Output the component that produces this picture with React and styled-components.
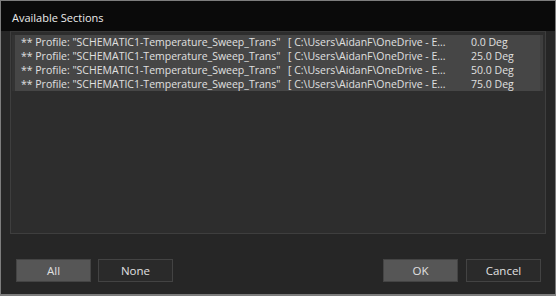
import React from "react";
import styled, { createGlobalStyle } from "styled-components";

const Global = createGlobalStyle`
  html, body { margin: 0; padding: 0; background: #262626; }
  body { font-family: "Open Sans", "Liberation Sans", sans-serif; }
  * { box-sizing: border-box; }
`;

const Window = styled.div`
  width: 556px;
  height: 296px;
  border: 1px solid #7d7d7d;
  border-bottom-width: 2px;
  background: #262626;
  display: flex;
  flex-direction: column;
  color: #e0e0e0;
  font-size: 10.5px;
`;

const TitleBar = styled.div`
  height: 30px;
  background: #0a0a0a;
  display: flex;
  align-items: center;
  padding: 3px 0 0 11px;
  color: #ececec;
  font-size: 11px;
`;

const ListBox = styled.div`
  margin: 0 9px;
  height: 203px;
  background: #2d2d2d;
  border: 1px solid #3e3e3e;
  border-top-color: #383838;
  padding: 3px 1px 0 1px;
`;

const Rows = styled.div`
  display: flex;
  flex-direction: column;
  border-left: 3px solid #333333;
  border-right: 3px solid #3f3f3f;
  margin-right: 1px;
`;

const Row = styled.div`
  display: grid;
  grid-template-columns: 267px 183px auto;
  height: 14px;
  align-items: center;
  padding-left: 6px;
  background: ${(p) => (p.$selected ? "#464646" : "transparent")};
  white-space: nowrap;
  line-height: 14px;
`;

const Cell = styled.span`
  overflow: visible;
`;

const Footer = styled.div`
  display: flex;
  align-items: flex-start;
  padding: 25px 14px 0 15px;
`;

const Group = styled.div`
  display: flex;
  gap: ${(p) => p.$gap}px;
  margin-left: ${(p) => (p.$push ? "auto" : "0")};
`;

const Button = styled.button`
  width: 75px;
  height: 23px;
  font-family: inherit;
  font-size: 11.5px;
  color: #e0e0e0;
  background: ${(p) => (p.$primary ? "#565656" : "#2a2a2a")};
  border: 1px solid ${(p) => (p.$primary ? "#444444" : "#434343")};
  padding: 0;
  display: flex;
  align-items: center;
  justify-content: center;
`;

const rows = ["0.0", "25.0", "50.0", "75.0"];

export default function App() {
  return (
    <>
      <Global />
      <Window>
        <TitleBar>Available Sections</TitleBar>
        <ListBox>
          <Rows>
            {rows.map((d) => (
              <Row key={d} $selected>
                <Cell>** Profile: "SCHEMATIC1-Temperature_Sweep_Trans"</Cell>
                <Cell>[ C:\Users\AidanF\OneDrive - E...</Cell>
                <Cell>{d} Deg</Cell>
              </Row>
            ))}
          </Rows>
        </ListBox>
        <Footer>
          <Group $gap={7}>
            <Button $primary>All</Button>
            <Button>None</Button>
          </Group>
          <Group $gap={8} $push>
            <Button $primary>OK</Button>
            <Button>Cancel</Button>
          </Group>
        </Footer>
      </Window>
    </>
  );
}
